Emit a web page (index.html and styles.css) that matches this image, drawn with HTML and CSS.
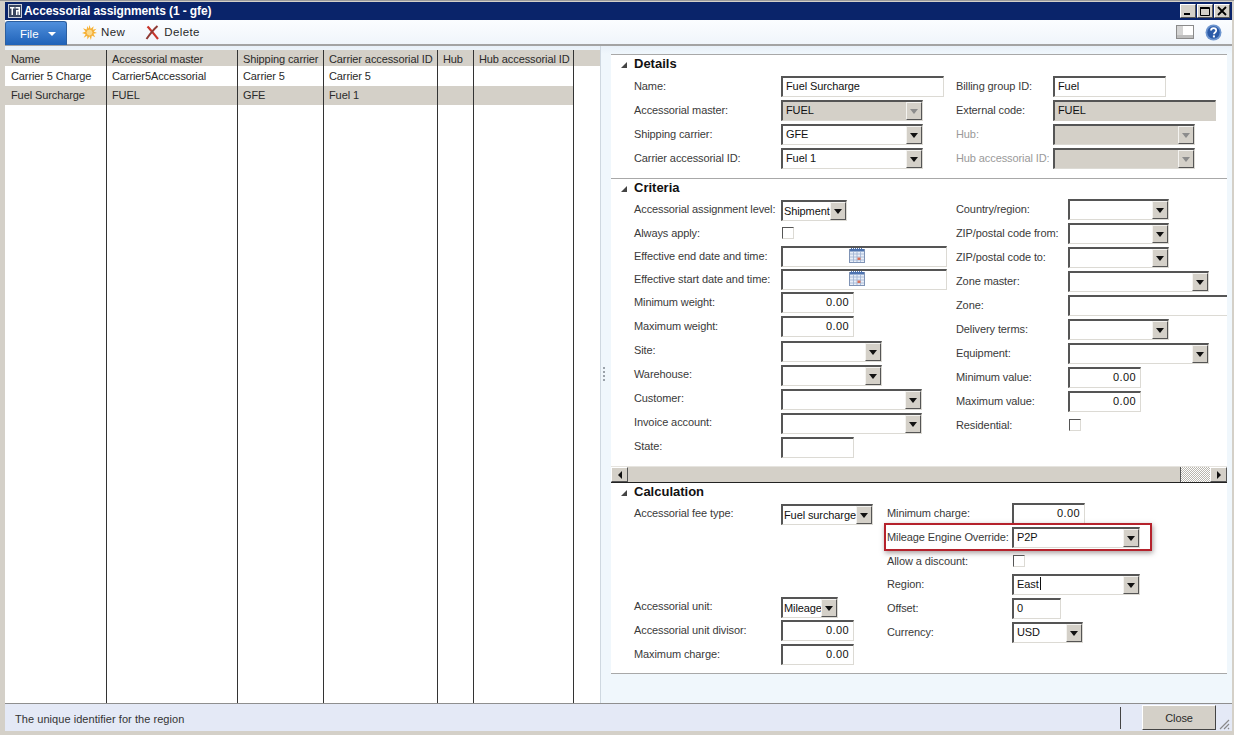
FILE: index.html
```html
<!DOCTYPE html>
<html lang="en">
  <head>
    <meta charset="UTF-8" />
    <title>Accessorial assignments (1 - gfe)</title>
    <link rel="stylesheet" href="styles.css">
  </head>
  <body>
    <div class="window">
      <div class="titlebar">
        <svg class="app-icon" width="14" height="14" viewBox="0 0 14 14">
          <rect x="0.500" y="0.500" width="13" height="13" fill="#3a4660" stroke="#c9ced9"/>
          <path d="M2 3h4.500v1.500H5V11H3.500V4.500H2zM7.500 3H12v8h-1.500V7.500h-1V11H8V6h2.500V4.500h-3z" fill="#fff"/>
        </svg>
        <span class="title-text">Accessorial assignments (1 - gfe)</span>
        <div class="win-buttons">
          <span class="win-btn"><svg width="10" height="10" viewBox="0 0 10 10"><rect x="1" y="7" width="6" height="2"/></svg></span>
          <span class="win-btn"><svg width="10" height="10" viewBox="0 0 10 10"><path d="M0.500 1.500h9v8h-9zM0.500 1v1.500h9" fill="none" stroke="#000"/></svg></span>
          <span class="win-btn"><svg width="10" height="10" viewBox="0 0 10 10"><path d="M1 1l8 8M9 1l-8 8" stroke="#000" stroke-width="1.800"/></svg></span>
        </div>
      </div>

      <div class="toolbar">
        <div class="file-btn">File <span class="file-arrow"></span></div>
        <div class="tool-btn tool-new">
          <svg width="15" height="15" viewBox="0 0 16 16">
            <path d="M8 0l1.300 4L12.500 1.300 11.500 5 15.500 4 12.500 7 16 8.500 12.200 9.300 14 13 10.500 11.300 9.500 16 8 12 5.800 15.500 5.500 11.500 1.800 13.500 3.800 9.800 0 8.500 3.800 7 1 3.500 5 4.800 5.500 1 7 4z" fill="#f7b335"/>
            <circle cx="8" cy="8" r="3.600" fill="#fbd98a" stroke="#ee9a22" stroke-width="0.600"/>
          </svg>
          New
        </div>
        <div class="tool-btn tool-delete">
          <svg width="15" height="15" viewBox="0 0 15 15">
            <path d="M2.500 1.500c3 3 6 7 10.500 12.500" fill="none" stroke="#c8352b" stroke-width="2.200"/>
            <path d="M12.500 1C8.500 4.500 5 9 1.500 14" fill="none" stroke="#8f3a34" stroke-width="2"/>
          </svg>
          Delete
        </div>
        <div class="tool-right">
          <svg width="18" height="14" viewBox="0 0 18 14">
            <rect x="0.500" y="0.500" width="17" height="13" fill="#fff" stroke="#8a8a8a"/>
            <rect x="1" y="1" width="6" height="9" fill="#d4d4d4"/>
            <rect x="1" y="10" width="16" height="3" fill="#bdbdbd"/>
          </svg>
          <svg width="17" height="17" viewBox="0 0 17 17">
            <circle cx="8.500" cy="8.500" r="8" fill="#6d95cf"/>
            <circle cx="8.500" cy="8.500" r="6.200" fill="#2a5aa8"/>
            <path d="M6 6.500c0-3.200 5.200-3.200 5.200 0 0 2-2.300 2-2.300 3.800" fill="none" stroke="#fff" stroke-width="1.700"/>
            <rect x="7.900" y="11.400" width="2" height="2" fill="#fff"/>
          </svg>
        </div>
      </div>

      <div class="main">
        <div class="list-pane">
          <table class="list">
            <thead>
              <tr>
                <th class="c-name">Name</th>
                <th class="c-master">Accessorial master</th>
                <th class="c-carrier">Shipping carrier</th>
                <th class="c-id">Carrier accessorial ID</th>
                <th class="c-hub">Hub</th>
                <th class="c-hubid">Hub accessorial ID</th>
                <th class="c-rest"></th>
              </tr>
            </thead>
            <tbody>
              <tr class="line">
                <td>Carrier 5 Charge</td>
                <td>Carrier5Accessorial</td>
                <td>Carrier 5</td>
                <td>Carrier 5</td>
                <td></td>
                <td></td>
                <td class="c-rest"></td>
              </tr>
              <tr class="line selected">
                <td>Fuel Surcharge</td>
                <td>FUEL</td>
                <td>GFE</td>
                <td>Fuel 1</td>
                <td></td>
                <td></td>
                <td class="c-rest"></td>
              </tr>
              <tr class="filler">
                <td></td><td></td><td></td><td></td><td></td><td></td><td class="c-rest"></td>
              </tr>
            </tbody>
          </table>
        </div>

        <div class="splitter"><span class="grip-dots"></span></div>

        <div class="detail-pane">
          <div class="panel">
            <section class="section section-details">
              <h3 class="section-head">Details</h3>
              <div class="columns">
                <div class="col col-main">
                  <div class="row"><label>Name:</label><div class="field w-163">Fuel Surcharge</div></div>
                  <div class="row"><label>Accessorial master:</label><div class="field combo off w-142">FUEL<span class="drop"></span></div></div>
                  <div class="row"><label>Shipping carrier:</label><div class="field combo w-142">GFE<span class="drop"></span></div></div>
                  <div class="row"><label>Carrier accessorial ID:</label><div class="field combo w-142">Fuel 1<span class="drop"></span></div></div>
                </div>
                <div class="col">
                  <div class="row lbl-98"><label>Billing group ID:</label><div class="field w-113">Fuel</div></div>
                  <div class="row lbl-98"><label>External code:</label><div class="field off flat w-163">FUEL</div></div>
                  <div class="row lbl-98 dim"><label>Hub:</label><div class="field combo off w-142"><span class="drop"></span></div></div>
                  <div class="row lbl-98 dim"><label>Hub accessorial ID:</label><div class="field combo off w-142"><span class="drop"></span></div></div>
                </div>
              </div>
            </section>

            <section class="section section-criteria">
              <h3 class="section-head">Criteria</h3>
              <div class="columns">
                <div class="col col-main">
                  <div class="row"><label>Accessorial assignment level:</label><div class="field combo low w-66">Shipment<span class="drop"></span></div></div>
                  <div class="row"><label>Always apply:</label><span class="check"></span></div>
                  <div class="row tight"><label>Effective end date and time:</label><div class="field date w-166"><svg class="cal" width="16" height="16" viewBox="0 0 16 16"><use href="#calendar"/></svg></div></div>
                  <div class="row tight"><label>Effective start date and time:</label><div class="field date w-166"><svg class="cal" width="16" height="16" viewBox="0 0 16 16"><use href="#calendar"/></svg></div></div>
                  <div class="row tight"><label>Minimum weight:</label><div class="field num w-73">0.00</div></div>
                  <div class="row"><label>Maximum weight:</label><div class="field num w-73">0.00</div></div>
                  <div class="row"><label>Site:</label><div class="field combo low w-101"><span class="drop"></span></div></div>
                  <div class="row"><label>Warehouse:</label><div class="field combo low w-101"><span class="drop"></span></div></div>
                  <div class="row"><label>Customer:</label><div class="field combo low w-141"><span class="drop"></span></div></div>
                  <div class="row"><label>Invoice account:</label><div class="field combo low w-141"><span class="drop"></span></div></div>
                  <div class="row"><label>State:</label><div class="field low w-73"></div></div>
                </div>
                <div class="col">
                  <div class="row lbl-112"><label>Country/region:</label><div class="field combo w-101"><span class="drop"></span></div></div>
                  <div class="row lbl-112"><label>ZIP/postal code from:</label><div class="field combo w-101"><span class="drop"></span></div></div>
                  <div class="row lbl-112"><label>ZIP/postal code to:</label><div class="field combo w-101"><span class="drop"></span></div></div>
                  <div class="row lbl-112"><label>Zone master:</label><div class="field combo w-141"><span class="drop"></span></div></div>
                  <div class="row lbl-112"><label>Zone:</label><div class="field w-170"></div></div>
                  <div class="row lbl-112"><label>Delivery terms:</label><div class="field combo w-101"><span class="drop"></span></div></div>
                  <div class="row lbl-112"><label>Equipment:</label><div class="field combo w-141"><span class="drop"></span></div></div>
                  <div class="row lbl-112"><label>Minimum value:</label><div class="field num w-73">0.00</div></div>
                  <div class="row lbl-112"><label>Maximum value:</label><div class="field num w-73">0.00</div></div>
                  <div class="row lbl-112"><label>Residential:</label><span class="check"></span></div>
                </div>
              </div>
              <div class="hscroll">
                <span class="scroll-btn"><i class="tri-left"></i></span>
                <span class="scroll-thumb"></span>
                <span class="scroll-track"></span>
                <span class="scroll-btn"><i class="tri-right"></i></span>
              </div>
            </section>

            <section class="section section-calc">
              <h3 class="section-head">Calculation</h3>
              <div class="columns">
                <div class="col col-calc">
                  <div class="row"><label>Accessorial fee type:</label><div class="field combo low w-92">Fuel surcharge<span class="drop"></span></div></div>
                  <div class="row-gap"></div>
                  <div class="row"><label>Accessorial unit:</label><div class="field combo low w-57">Mileage<span class="drop"></span></div></div>
                  <div class="row"><label>Accessorial unit divisor:</label><div class="field num w-73">0.00</div></div>
                  <div class="row"><label>Maximum charge:</label><div class="field num w-73">0.00</div></div>
                </div>
                <div class="col">
                  <div class="row lbl-125"><label>Minimum charge:</label><div class="field num w-73">0.00</div></div>
                  <div class="row lbl-125 marked"><label>Mileage Engine Override:</label><div class="field combo w-128">P2P<span class="drop"></span></div><span class="callout"></span></div>
                  <div class="row lbl-125"><label>Allow a discount:</label><span class="check"></span></div>
                  <div class="row lbl-125 tight"><label>Region:</label><div class="field combo w-128">East<span class="caret"></span><span class="drop"></span></div></div>
                  <div class="row lbl-125"><label>Offset:</label><div class="field w-49">0</div></div>
                  <div class="row lbl-125"><label>Currency:</label><div class="field combo w-71">USD<span class="drop"></span></div></div>
                </div>
              </div>
            </section>
          </div>
        </div>
      </div>

      <div class="statusbar">
        <span class="status-text">The unique identifier for the region</span>
        <span class="status-sep"></span>
        <span class="close-btn">Close</span>
        <svg class="resize-grip" width="12" height="12" viewBox="0 0 12 12">
          <path d="M11 2L2 11M11 6L6 11M11 10L10 11" stroke="#8a8a8a" stroke-width="1.200"/>
        </svg>
      </div>
    </div>

    <svg width="0" height="0" class="defs">
      <symbol id="calendar" viewBox="0 0 16 16">
        <rect x="0.500" y="2.500" width="15" height="13" fill="#e8eef8" stroke="#7f93b5"/>
        <path d="M2 1.500h12" stroke="#4f74b0" stroke-width="1" stroke-dasharray="1 1"/>
        <rect x="1" y="2" width="14" height="2.500" fill="#4f74b0"/>
        <path d="M1 7h14M1 10h14M1 13h14M4.500 4v11M8 4v11M11.500 4v11" stroke="#9db0cf" stroke-width="0.800"/>
        <rect x="8.500" y="10.500" width="3" height="2.500" fill="#d9705a"/>
      </symbol>
    </svg>
  </body>
</html>
```

FILE: styles.css
```css
* {
  box-sizing: border-box;
}

html,
body {
  margin: 0;
  padding: 0;
  height: 100%;
  overflow: hidden;
}

body {
  background-color: #d4d0c8;
  font-family: "Liberation Sans", Arial, sans-serif;
  font-size: 11px;
  letter-spacing: -0.1px;
  color: #2a2a2a;
}

.defs {
  display: block;
  height: 0;
}

.window {
  height: 735px;
  padding: 1px 2px 4px 5px;
  display: flex;
  flex-direction: column;
  border-top: 1px solid #9a9a9a;
}

/* Title bar */
.titlebar {
  height: 18px;
  flex: none;
  background-color: #0a246a;
  display: flex;
  align-items: center;
  padding-left: 3px;
  color: #fff;
}
.app-icon {
  margin-right: 2px;
}
.title-text {
  font-weight: bold;
  font-size: 12px;
  letter-spacing: -0.1px;
}
.win-buttons {
  margin-left: auto;
  display: flex;
  gap: 1px;
  padding-right: 2px;
}
.win-btn {
  width: 16px;
  height: 14px;
  background-color: #d4d0c8;
  border: 1px solid;
  border-color: #fff #555 #555 #fff;
  display: flex;
  align-items: center;
  justify-content: center;
}

/* Toolbar */
.toolbar {
  height: 26px;
  flex: none;
  background: linear-gradient(#fbfdff, #f0f5fb);
  border-bottom: 2px solid #a3a3a3;
  display: flex;
  align-items: center;
  font-size: 11.500px;
  letter-spacing: 0.4px;
}
.file-btn {
  width: 62px;
  height: 24px;
  margin-top: 2px;
  background: linear-gradient(#4f8fdc, #1f62b8);
  border: 1px solid #2c5f9f;
  border-bottom: none;
  border-radius: 3px 3px 0 0;
  color: #fff;
  display: flex;
  align-items: center;
  padding-left: 14px;
  letter-spacing: 0;
}
.file-arrow {
  margin-left: 9px;
  border-left: 4px solid transparent;
  border-right: 4px solid transparent;
  border-top: 4px solid #fff;
}
.tool-btn {
  display: flex;
  align-items: center;
  gap: 4px;
}
.tool-new {
  margin-left: 15px;
}
.tool-delete {
  margin-left: 20px;
}
.tool-right {
  margin-left: auto;
  display: flex;
  align-items: center;
  gap: 11px;
  padding-right: 10px;
}

/* Main area */
.main {
  flex: 1;
  display: flex;
  min-height: 0;
  background: linear-gradient(#e8f0f8, #f0f7fc 8px);
}

/* Left list */
.list-pane {
  width: 595px;
  flex: none;
  padding-top: 4px;
  display: flex;
}
.list {
  width: 595px;
  height: 653px;
  table-layout: fixed;
  border-collapse: separate;
  border-spacing: 0;
  background-color: #fff;
}
.list th {
  height: 16px;
  padding: 1px 0 0 5px;
  background-color: #d4d0c8;
  border-right: 1px solid #333;
  font-weight: normal;
  text-align: left;
  white-space: nowrap;
  overflow: hidden;
}
.list td {
  padding: 0 0 0 5px;
  border-right: 1px solid #333;
  white-space: nowrap;
  overflow: hidden;
}
.list .line td {
  height: 20px;
}
.list .line.selected td {
  height: 19px;
  padding-bottom: 1px;
  background-color: #d4d0c8;
}
.list .c-rest,
.list .line.selected .c-rest {
  border-right: none;
  background-color: transparent;
}
.list th.c-rest {
  background-color: #d4d0c8;
}
.list th:first-child,
.list td:first-child {
  padding-left: 6px;
}
.c-name { width: 102px; }
.c-master { width: 131px; }
.c-carrier { width: 86px; }
.c-id { width: 114px; }
.c-hub { width: 36px; }
.c-hubid { width: 100px; }
.c-rest { width: 26px; }

/* Splitter between list and details */
.splitter {
  width: 11px;
  flex: none;
  border-left: 1px solid #cfd8e0;
  position: relative;
}
.grip-dots {
  position: absolute;
  left: 2px;
  top: 321px;
  width: 2px;
  height: 16px;
  background: repeating-linear-gradient(#9aa2aa 0 2px, transparent 2px 4px);
}

/* Right side */
.detail-pane {
  flex: 1;
  min-width: 0;
  padding: 8px 5px 0 0;
}
.panel {
  background-color: #fff;
  border-top: 1px solid #a8a8a8;
  border-bottom: 1px solid #a8a8a8;
  height: 620px;
  overflow: hidden;
}
.section-head {
  margin: 0;
  height: 19px;
  padding-left: 23px;
  font-size: 13px;
  line-height: 18px;
  letter-spacing: 0;
  font-weight: bold;
  color: #111;
  position: relative;
}
.section-head::before {
  content: "";
  position: absolute;
  left: 10px;
  top: 7px;
  border-left: 6px solid transparent;
  border-bottom: 6px solid #444;
}
.section-details {
  height: 124px;
  border-bottom: 1px solid #a8a8a8;
}
.section-criteria .section-head,
.section-calc .section-head {
  height: 18px;
}
.columns {
  display: flex;
  padding-left: 23px;
}
.col-main {
  width: 322px;
  flex: none;
}
.col-calc {
  width: 253px;
  flex: none;
}
.section-criteria .columns {
  height: 269px;
}

/* Form rows */
.row {
  height: 24px;
  display: flex;
  align-items: center;
  position: relative;
}
.row.tight {
  height: 23px;
}
.row.tight label {
  margin-top: -1px;
}
.row-gap {
  height: 69px;
}
.row label {
  width: 147px;
  flex: none;
  color: #3a3a3a;
  white-space: nowrap;
}
.lbl-98 label { width: 97px; }
.lbl-112 label { width: 112px; }
.lbl-125 label { width: 125px; }
.dim label {
  color: #9a9a9a;
}

.field {
  height: 21px;
  flex: none;
  background-color: #fff;
  border: 1px solid #dcdad4;
  border-top: 2px solid #555;
  border-left: 2px solid #555;
  padding-left: 3px;
  line-height: 17px;
  color: #111;
  position: relative;
  white-space: nowrap;
  overflow: hidden;
}
.field.off {
  background-color: #d4d0c8;
}
.field.flat {
  border-right-color: #d4d0c8;
  border-bottom-color: #d4d0c8;
}
.field.num {
  text-align: right;
  padding-right: 4px;
  letter-spacing: 0.4px;
}
.field.low {
  margin-top: 3px;
  padding-left: 1px;
  line-height: 18px;
}
.w-49 { width: 49px; }
.w-57 { width: 57px; }
.w-66 { width: 66px; }
.w-71 { width: 71px; }
.w-73 { width: 73px; }
.w-92 { width: 92px; }
.w-101 { width: 101px; }
.w-113 { width: 113px; }
.w-128 { width: 128px; }
.w-141 { width: 141px; }
.w-142 { width: 142px; }
.w-163 { width: 163px; }
.w-166 { width: 166px; }
.w-170 { width: 170px; }

.combo .drop {
  position: absolute;
  top: 0;
  right: 0;
  width: 16px;
  height: 18px;
  background-color: #d4d0c8;
  border: 1px solid;
  border-color: #f4f3f0 #555 #555 #f4f3f0;
}
.combo .drop::after {
  content: "";
  position: absolute;
  left: 3px;
  top: 6px;
  border-left: 4px solid transparent;
  border-right: 4px solid transparent;
  border-top: 5px solid #111;
}
.combo.off .drop::after {
  border-top-color: #8c8c8c;
}
.caret {
  display: inline-block;
  width: 1px;
  height: 13px;
  margin-left: 1px;
  vertical-align: -2px;
  background-color: #111;
}
.cal {
  position: absolute;
  left: 66px;
  top: -1px;
}
.check {
  width: 12px;
  height: 12px;
  background-color: #fff;
  border: 1px solid #dcdad4;
  border-top: 1px solid #555;
  border-left: 1px solid #555;
  margin-left: 1px;
}

/* Marked field in the calculation group */
.callout {
  position: absolute;
  left: -3px;
  top: -2px;
  width: 268px;
  height: 28px;
  border: 2px solid #b5222c;
  box-shadow: 1px 2px 5px rgba(80, 60, 60, 0.5);
  pointer-events: none;
}

/* Horizontal scroll bar */
.hscroll {
  height: 17px;
  display: flex;
  border-top: 1px solid #e6e4df;
  border-bottom: 1px solid #222;
}
.scroll-btn {
  width: 17px;
  flex: none;
  background-color: #d4d0c8;
  border: 1px solid;
  border-color: #fff #555 #555 #fff;
  display: flex;
  align-items: center;
  justify-content: center;
}
.tri-left {
  border-top: 4px solid transparent;
  border-bottom: 4px solid transparent;
  border-right: 4px solid #111;
}
.tri-right {
  border-top: 4px solid transparent;
  border-bottom: 4px solid transparent;
  border-left: 4px solid #111;
}
.scroll-thumb {
  flex: 1;
  background-color: #d4d0c8;
  border-right: 1px solid #555;
}
.scroll-track {
  width: 29px;
  flex: none;
  background-color: #e4e2dd;
  background-image: repeating-conic-gradient(#b9b6ae 0 25%, #fff 0 50%);
  background-size: 2px 2px;
}

/* Status bar */
.statusbar {
  height: 28px;
  flex: none;
  background-color: #e4e9f6;
  border-top: 1px solid #8f8f8f;
  display: flex;
  align-items: center;
  padding-left: 10px;
}
.status-text {
  color: #333;
  margin-top: 2px;
  letter-spacing: 0.05px;
}
.status-sep {
  width: 1px;
  height: 22px;
  margin-left: auto;
  background-color: #444;
}
.close-btn {
  width: 74px;
  height: 25px;
  margin-left: 21px;
  background-color: #d4d0c8;
  border: 1px solid;
  border-color: #fff #444 #444 #fff;
  display: flex;
  align-items: center;
  justify-content: center;
}
.resize-grip {
  margin: 12px 2px 0 2px;
}
```
